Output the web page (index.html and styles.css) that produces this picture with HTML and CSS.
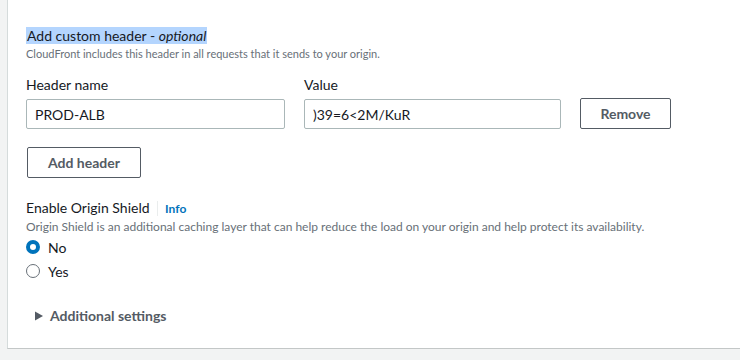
FILE: index.html
```html
<!DOCTYPE html>
<html lang="en">
<head>
    <meta charset="UTF-8">
    <title>Origin settings</title>
    <link rel="stylesheet" href="styles.css">
</head>
<body>
    <div class="card">
        <div class="field">
            <div class="fieldTitle"><span class="selected">Add custom header - <i>optional</i></span></div>
            <div class="fieldDesc small">CloudFront includes this header in all requests that it sends to your origin.</div>
        </div>

        <div class="headerRow">
            <div class="col">
                <label class="colLabel">Header name</label>
                <input class="textInput" type="text" value="PROD-ALB">
            </div>
            <div class="col">
                <label class="colLabel">Value</label>
                <input class="textInput valueInput" type="text" value=")39=6<2M/KuR">
            </div>
            <button class="btn removeBtn">Remove</button>
        </div>

        <button class="btn addBtn">Add header</button>

        <div class="field shield">
            <div class="fieldTitle">Enable Origin Shield <span class="infoLink">Info</span></div>
            <div class="fieldDesc">Origin Shield is an additional caching layer that can help reduce the load on your origin and help protect its availability.</div>
            <div class="radios">
                <label class="radio"><span class="dot checked"></span>No</label>
                <label class="radio"><span class="dot"></span>Yes</label>
            </div>
        </div>

        <div class="expander">
            <svg width="10" height="10" viewBox="0 0 10 10"><polygon points="1,0.5 9,5 1,9.5" fill="#545b64"/></svg>
            <span>Additional settings</span>
        </div>
    </div>
</body>
</html>
```

FILE: styles.css
```css
body {
    margin: 0;
    background-color: #f2f3f3;
    font-family: Lato, "Open Sans", Arial, sans-serif;
    color: #16191f;
}

.card {
    margin-left: 7px;
    height: 349px;
    box-sizing: border-box;
    background-color: #fff;
    border-left: 1px solid #d5dbdb;
    border-bottom: 1px solid #c3c7c7;
    padding: 26px 0 0 18px;
}

.fieldTitle {
    font-size: 14px;
    line-height: 20px;
}

.selected {
    background-color: #b4d5fe;
    padding: 0 1px;
}

.fieldDesc {
    font-size: 12px;
    line-height: 16px;
    color: #687078;
}

.fieldDesc.small {
    font-size: 11px;
}

.headerRow {
    display: flex;
    align-items: flex-end;
    gap: 19px;
    margin-top: 13px;
}

.col {
    display: flex;
    flex-direction: column;
}

.colLabel {
    font-size: 14px;
    line-height: 20px;
    margin-bottom: 4px;
}

.textInput {
    width: 259px;
    height: 30px;
    box-sizing: border-box;
    border: 1px solid #aab7b8;
    border-radius: 2px;
    padding: 0 8px;
    font-family: inherit;
    font-size: 14px;
    color: #16191f;
}

.valueInput {
    width: 257px;
}

.btn {
    height: 31px;
    box-sizing: border-box;
    background: #fff;
    border: 1px solid #545b64;
    border-radius: 2px;
    font-family: inherit;
    font-size: 14px;
    font-weight: 700;
    color: #545b64;
}

.removeBtn {
    width: 91px;
}

.addBtn {
    width: 114px;
    margin-top: 18px;
    margin-left: 1px;
    display: block;
}

.shield {
    margin-top: 20px;
}

.infoLink {
    font-size: 12px;
    font-weight: 700;
    color: #0073bb;
    border-left: 1px solid #eaeded;
    padding-left: 7px;
    margin-left: 4px;
}

.radio {
    display: flex;
    align-items: center;
    font-size: 14px;
    height: 24px;
}

.dot {
    width: 14px;
    height: 14px;
    box-sizing: border-box;
    border-radius: 50%;
    border: 1px solid #687078;
    margin-right: 8px;
}

.dot.checked {
    border: 4px solid #0073bb;
}

.expander {
    display: flex;
    align-items: center;
    gap: 6px;
    margin-top: 24px;
    margin-left: 8px;
    font-size: 14px;
    font-weight: 700;
    color: #545b64;
}
```
